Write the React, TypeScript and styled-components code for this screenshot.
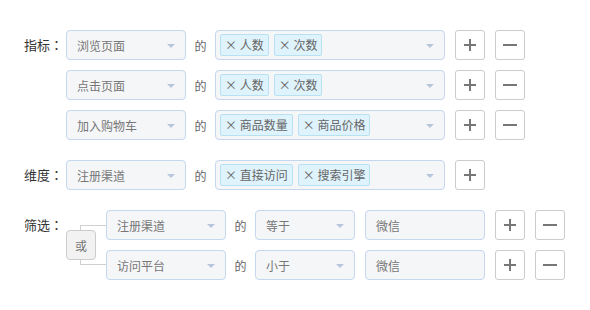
import React from 'react';
import styled, { createGlobalStyle } from 'styled-components';

const GlobalStyle = createGlobalStyle`
  body {
    margin: 0;
    background: #fff;
    font-family: "Noto Sans CJK SC", "Noto Sans", sans-serif;
  }
`;

const Page = styled.div`
  display: flex;
  flex-direction: column;
  gap: 20px;
  padding: 30px 0 0 24px;
`;

const Section = styled.div`
  display: flex;
  align-items: flex-start;
`;

const Label = styled.div`
  width: 42px;
  height: 30px;
  line-height: 30px;
  font-size: 13px;
  color: #333;
  white-space: nowrap;
`;

const Colon = styled.span`
  font-family: "Noto Sans CJK TC", sans-serif;
`;

const Rows = styled.div`
  display: flex;
  flex-direction: column;
  gap: 10px;
`;

const Row = styled.div`
  display: flex;
  align-items: center;
  height: 30px;
`;

const Field = styled.div<{ $w: number; $gap?: number }>`
  position: relative;
  box-sizing: border-box;
  width: ${({ $w }) => $w}px;
  height: 30px;
  margin-left: ${({ $gap = 0 }) => $gap}px;
  display: flex;
  align-items: center;
  padding: 0 10px;
  background: #f5f6f8;
  border: 1px solid #c4d7ef;
  border-radius: 4px;
  font-size: 12px;
  color: #777;
`;

const TagField = styled(Field)`
  padding: 0 4px;
  gap: 5px;
`;

const Arrow = styled.span`
  position: absolute;
  right: 10px;
  top: 13px;
  width: 0;
  height: 0;
  border-left: 4px solid transparent;
  border-right: 4px solid transparent;
  border-top: 4px solid #b7c6dc;
`;

const Of = styled.div<{ $w: number }>`
  width: ${({ $w }) => $w}px;
  text-align: center;
  font-size: 12px;
  color: #666;
`;

const Tag = styled.span`
  box-sizing: border-box;
  height: 22px;
  line-height: 20px;
  padding: 0 4px;
  background: #dff3fc;
  border: 1px solid #b8e2f4;
  border-radius: 2px;
  font-size: 12px;
  color: #666;
  white-space: nowrap;
`;

const IconButton = styled.button`
  box-sizing: border-box;
  width: 30px;
  height: 30px;
  margin-left: 10px;
  padding: 0;
  display: flex;
  align-items: center;
  justify-content: center;
  background: #fff;
  border: 1px solid #ccc;
  border-radius: 3px;
  color: #777;
`;

const Bracket = styled.div`
  position: relative;
  width: 40px;
  height: 70px;
  display: flex;
  align-items: center;
  &::before {
    content: '';
    position: absolute;
    left: 14px;
    right: 0;
    top: 15px;
    bottom: 15px;
    border: 1px solid #d0d0d0;
    border-right: none;
  }
`;

const OrButton = styled.div`
  position: relative;
  box-sizing: border-box;
  width: 30px;
  height: 30px;
  display: flex;
  align-items: center;
  justify-content: center;
  background: #f2f2f2;
  border: 1px solid #ccc;
  border-radius: 4px;
  font-size: 12px;
  color: #777;
`;

const PlusIcon = () => (
  <svg width="14" height="14" viewBox="0 0 14 14">
    <path d="M7 1v12M1 7h12" stroke="currentColor" strokeWidth="2" />
  </svg>
);

const MinusIcon = () => (
  <svg width="14" height="14" viewBox="0 0 14 14">
    <path d="M0 7h14" stroke="currentColor" strokeWidth="2" />
  </svg>
);

const Select = ({ w, text }: { w: number; text: string }) => (
  <Field $w={w}>
    {text}
    <Arrow />
  </Field>
);

const TagSelect = ({ tags }: { tags: string[] }) => (
  <TagField $w={230}>
    {tags.map((t) => (
      <Tag key={t}>× {t}</Tag>
    ))}
    <Arrow />
  </TagField>
);

const metrics = [
  { name: '浏览页面', tags: ['人数', '次数'] },
  { name: '点击页面', tags: ['人数', '次数'] },
  { name: '加入购物车', tags: ['商品数量', '商品价格'] },
];

const filters = [
  { name: '注册渠道', op: '等于', value: '微信' },
  { name: '访问平台', op: '小于', value: '微信' },
];

const App = () => (
  <>
    <GlobalStyle />
    <Page>
      <Section>
        <Label>指标<Colon>：</Colon></Label>
        <Rows>
          {metrics.map((m) => (
            <Row key={m.name}>
              <Select w={120} text={m.name} />
              <Of $w={29}>的</Of>
              <TagSelect tags={m.tags} />
              <IconButton><PlusIcon /></IconButton>
              <IconButton><MinusIcon /></IconButton>
            </Row>
          ))}
        </Rows>
      </Section>
      <Section>
        <Label>维度<Colon>：</Colon></Label>
        <Rows>
          <Row>
            <Select w={120} text="注册渠道" />
            <Of $w={29}>的</Of>
            <TagSelect tags={['直接访问', '搜索引擎']} />
            <IconButton><PlusIcon /></IconButton>
          </Row>
        </Rows>
      </Section>
      <Section>
        <Label>筛选<Colon>：</Colon></Label>
        <Bracket>
          <OrButton>或</OrButton>
        </Bracket>
        <Rows>
          {filters.map((f) => (
            <Row key={f.name}>
              <Select w={120} text={f.name} />
              <Of $w={29}>的</Of>
              <Select w={100} text={f.op} />
              <Field $w={120} $gap={10}>{f.value}</Field>
              <IconButton><PlusIcon /></IconButton>
              <IconButton><MinusIcon /></IconButton>
            </Row>
          ))}
        </Rows>
      </Section>
    </Page>
  </>
);

export default App;
